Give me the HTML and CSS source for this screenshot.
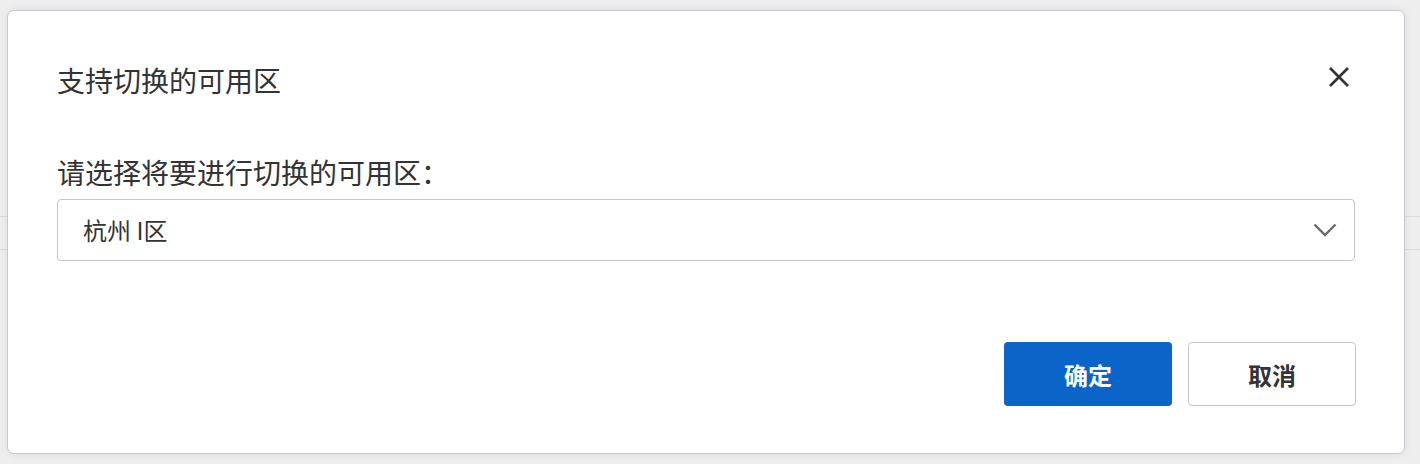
FILE: index.html
```html
<!DOCTYPE html>
<html lang="zh-CN">
<head>
<meta charset="utf-8">
<title>支持切换的可用区</title>
<link rel="stylesheet" href="styles.css">
</head>
<body>
<div class="page">
  <div class="dialog">
    <div class="dialog-header">
      <h2 class="dialog-title">支持切换的可用区</h2>
      <button class="close-btn" aria-label="关闭">
        <svg width="22" height="22" viewBox="0 0 22 22"><path d="M2 2 L20 20 M20 2 L2 20" stroke="#333" stroke-width="2.6" fill="none" stroke-linecap="butt"/></svg>
      </button>
    </div>
    <div class="dialog-body">
      <div class="field-label">请选择将要进行切换的可用区：</div>
      <div class="select">
        <span class="select-value">杭州 I区</span>
        <svg class="chevron" width="24" height="14" viewBox="0 0 24 14"><path d="M1.5 1.5 L12 12 L22.5 1.5" stroke="#6b6b6b" stroke-width="2.4" fill="none"/></svg>
      </div>
    </div>
    <div class="dialog-footer">
      <button class="btn btn-primary">确定</button>
      <button class="btn btn-default">取消</button>
    </div>
  </div>
</div>
</body>
</html>
```
FILE: styles.css
```css
html, body {
  margin: 0;
  padding: 0;
  background: #eeeeee;
}
body {
  font-family: "Noto Sans CJK SC", "Noto Sans", "Liberation Sans", sans-serif;
  color: #333;
}
.page {
  width: 1420px;
  height: 464px;
  padding: 10px 0 0 7px;
  box-sizing: border-box;
  background:
    linear-gradient(#dcdcdc, #dcdcdc) 0 216px / 100% 1px no-repeat,
    linear-gradient(#dcdcdc, #dcdcdc) 0 249px / 100% 1px no-repeat,
    #eeeeee;
}
.dialog {
  width: 1398px;
  height: 444px;
  box-sizing: border-box;
  background: #fff;
  border: 1px solid #c6c9cf;
  border-radius: 7px;
  box-shadow: 0 0 8px rgba(0,0,0,0.08);
  padding: 0 49px;
  display: flex;
  flex-direction: column;
}
.dialog-header {
  display: flex;
  align-items: center;
  justify-content: space-between;
  padding-top: 49px;
  height: 40px;
}
.dialog-title {
  margin: 0;
  font-size: 28px;
  font-weight: normal;
  line-height: 40px;
  color: #333;
}
.close-btn {
  border: 0;
  background: none;
  padding: 0;
  margin-right: 5px;
  margin-top: -6px;
  width: 22px;
  height: 22px;
  display: flex;
}
.dialog-body {
  margin-top: 52px;
  display: flex;
  flex-direction: column;
}
.field-label {
  font-size: 28px;
  line-height: 40px;
  color: #333;
}
.select {
  margin-top: 7px;
  height: 62px;
  box-sizing: border-box;
  border: 1px solid #c3c6cc;
  border-radius: 4px;
  display: flex;
  align-items: center;
  justify-content: space-between;
  padding: 0 17px 0 25px;
}
.select-value {
  font-size: 24px;
  line-height: 30px;
  color: #333;
}
.chevron {
  display: block;
}
.dialog-footer {
  margin-top: 81px;
  margin-right: -1px;
  display: flex;
  justify-content: flex-end;
  gap: 16px;
}
.btn {
  width: 168px;
  height: 64px;
  box-sizing: border-box;
  border-radius: 4px;
  font-family: inherit;
  font-size: 24px;
  font-weight: bold;
  padding: 0;
}
.btn-primary {
  background: #0b65c9;
  border: 0;
  color: #fff;
}
.btn-default {
  background: #fff;
  border: 1px solid #c4c6cb;
  color: #333;
}
```
